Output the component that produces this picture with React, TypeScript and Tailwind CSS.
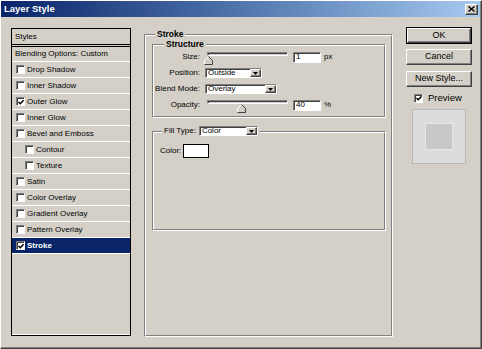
import React from 'react';

const raised = 'border border-white border-r-[#404040] border-b-[#404040] shadow-[inset_-1px_-1px_0_#808080]';
const sunken = 'border border-[#808080] border-r-white border-b-white shadow-[inset_1px_1px_0_#404040]';

interface StyleItem {
  label: string;
  checked?: boolean;
  indent?: boolean;
  selected?: boolean;
}

const styleItems: StyleItem[] = [
  { label: 'Drop Shadow' },
  { label: 'Inner Shadow' },
  { label: 'Outer Glow', checked: true },
  { label: 'Inner Glow' },
  { label: 'Bevel and Emboss' },
  { label: 'Contour', indent: true },
  { label: 'Texture', indent: true },
  { label: 'Satin' },
  { label: 'Color Overlay' },
  { label: 'Gradient Overlay' },
  { label: 'Pattern Overlay' },
  { label: 'Stroke', checked: true, selected: true },
];

function CheckBox({ checked }: { checked?: boolean }) {
  return (
    <div className={`w-[9px] h-[9px] bg-white shrink-0 ${sunken} flex items-center justify-center`}>
      {checked && (
        <svg width="7" height="7" viewBox="0 0 7 7" className="ml-[1px] mt-[1px]">
          <path d="M0.5 3 L2.5 5 L6.5 1" fill="none" stroke="#000" strokeWidth="1.6" />
        </svg>
      )}
    </div>
  );
}

function Group({ className, children }: { className: string; children?: React.ReactNode }) {
  return (
    <div className={`relative border border-[#808080] border-r-white border-b-white ${className}`}>
      <div className="h-full border border-white border-r-[#808080] border-b-[#808080]">{children}</div>
    </div>
  );
}

function Select({ value, width }: { value: string; width: string }) {
  return (
    <div className={`${width} h-[10px] bg-white ${sunken} flex items-center justify-between`}>
      <span className="pl-[2px] text-[8px] leading-none">{value}</span>
      <div className={`w-[11px] h-[8px] bg-[#d4d0c8] ${raised} flex items-center justify-center`}>
        <svg width="5" height="3" viewBox="0 0 5 3">
          <path d="M0 0 H5 L2.5 3 Z" fill="#000" />
        </svg>
      </div>
    </div>
  );
}

function Slider({ thumb }: { thumb: string }) {
  return (
    <div className="relative w-[81px] h-[13px] ml-[2px]">
      <div className="mt-[3px] h-[4px] border border-[#808080] border-r-white border-b-white bg-[#d4d0c8] shadow-[inset_1px_1px_0_#404040]" />
      <svg className={`absolute top-[4px] ${thumb}`} width="9" height="9" viewBox="0 0 9 9">
        <path d="M0 9 V4.5 L4.5 0 L9 4.5 V9 Z" fill="#d4d0c8" />
        <path d="M0.5 8.5 V4.5 L4.5 0.5" fill="none" stroke="#fff" />
        <path d="M4.5 0.5 L8.5 4.5 V8.5 H0.5" fill="none" stroke="#404040" />
      </svg>
    </div>
  );
}

function NumField({ value }: { value: string }) {
  return (
    <div className={`w-[28px] h-[11px] bg-white ${sunken} flex items-center pl-[2px] text-[8px] leading-none`}>
      {value}
    </div>
  );
}

export default function App() {
  return (
    <div className="w-[482px] h-[349px] bg-[#d4d0c8] border border-white border-r-[#404040] border-b-[#404040] font-['Liberation_Sans',Arial,sans-serif] text-black overflow-hidden">
      <div className="h-full border-r border-b border-[#808080] flex flex-col">
        {/* Title bar */}
        <div className="h-[16px] shrink-0 flex items-center justify-between bg-gradient-to-r from-[#0a246a] to-[#a6caf0]">
          <span className="pl-[3px] text-[9.5px] font-bold text-white leading-none">Layer Style</span>
          <div className={`mr-[2px] w-[13px] h-[11px] bg-[#d4d0c8] ${raised} flex items-center justify-center`}>
            <svg width="7" height="6" viewBox="0 0 7 6">
              <path d="M0.5 0.5 L6.5 5.5 M6.5 0.5 L0.5 5.5" stroke="#000" strokeWidth="1.4" />
            </svg>
          </div>
        </div>

        {/* Body */}
        <div className="flex items-start pl-[10px] pt-[10px]">
          {/* Styles list */}
          <div className="mt-[1px] w-[120px] h-[308px] border border-black flex flex-col text-[8px]">
            <div className="h-[16px] flex items-center pl-[3px] border-b border-black">Styles</div>
            <div className="h-[1px]" />
            <div className="h-[16px] flex items-center pl-[3px] border-t border-black border-b border-b-white whitespace-nowrap">
              Blending Options: Custom
            </div>
            {styleItems.map(item => (
              <div
                key={item.label}
                className={`h-[16px] flex items-center border-b border-white ${item.indent ? 'pl-[13px]' : 'pl-[4px]'} ${
                  item.selected ? 'bg-[#0a246a] text-white font-bold' : ''
                }`}
              >
                <CheckBox checked={item.checked} />
                <span className="ml-[2px] whitespace-nowrap">{item.label}</span>
              </div>
            ))}
            <div className="flex-1 border-b border-white" />
          </div>

          {/* Stroke group */}
          <Group className="ml-[13px] mt-[7px] w-[249px] h-[303px]">
            <span className="absolute left-[10px] top-[-7px] px-[2px] bg-[#d4d0c8] text-[8.5px] font-bold leading-[12px]">Stroke</span>
            <div className="pl-[6px] pt-[8px] flex flex-col">
              <Group className="w-[234px] h-[74px]">
                <span className="absolute left-[11px] top-[-7px] px-[2px] bg-[#d4d0c8] text-[8.5px] font-bold leading-[12px]">Structure</span>
                <div className="pt-[3px] flex flex-col text-[8px]">
                  <div className="h-[16px] flex items-center">
                    <span className="w-[46px] text-right">Size:</span>
                    <div className="ml-[5px]"><Slider thumb="left-[-3px]" /></div>
                    <div className="ml-[5px]"><NumField value="1" /></div>
                    <span className="ml-[3px]">px</span>
                  </div>
                  <div className="h-[16px] flex items-center">
                    <span className="w-[46px] text-right">Position:</span>
                    <div className="ml-[5px]"><Select value="Outside" width="w-[57px]" /></div>
                  </div>
                  <div className="h-[16px] flex items-center">
                    <span className="w-[46px] text-right whitespace-nowrap">Blend Mode:</span>
                    <div className="ml-[5px]"><Select value="Overlay" width="w-[72px]" /></div>
                  </div>
                  <div className="h-[16px] flex items-center">
                    <span className="w-[46px] text-right">Opacity:</span>
                    <div className="ml-[5px]"><Slider thumb="left-[30px]" /></div>
                    <div className="ml-[5px]"><NumField value="40" /></div>
                    <span className="ml-[3px]">%</span>
                  </div>
                </div>
              </Group>

              <Group className="mt-[13px] w-[234px] h-[100px]">
                <div className="absolute left-[9px] top-[-7px] px-[2px] h-[12px] bg-[#d4d0c8] flex items-center text-[8px]">
                  <span className="mr-[3px]">Fill Type:</span>
                  <Select value="Color" width="w-[59px]" />
                </div>
                <div className="pl-[6px] pt-[11px] flex items-center text-[8px]">
                  <span>Color:</span>
                  <div className="ml-[2px] w-[26px] h-[14px] bg-white border border-black" />
                </div>
              </Group>
            </div>
          </Group>

          {/* Buttons */}
          <div className="ml-[13px] w-[66px] flex flex-col text-[9px]">
            <div className="h-[17px] border border-black">
              <div className={`h-full ${raised} flex items-center justify-center`}>OK</div>
            </div>
            <div className={`mt-[5px] h-[16px] ${raised} flex items-center justify-center`}>Cancel</div>
            <div className={`mt-[6px] h-[16px] ${raised} flex items-center justify-center`}>New Style...</div>
            <div className="mt-[5px] h-[12px] flex items-center pl-[8px]">
              <CheckBox checked />
              <span className="ml-[5px] text-[9.5px]">Preview</span>
            </div>
            <div className="mt-[5px] ml-[6px] w-[54px] h-[55px] bg-[#dcdcdc] border border-[#b8b8b8] flex items-center justify-center">
              <div className="w-[28px] h-[27px] bg-[#c8c8c8] border border-[#e6e6e6]" />
            </div>
          </div>
        </div>
      </div>
    </div>
  );
}
